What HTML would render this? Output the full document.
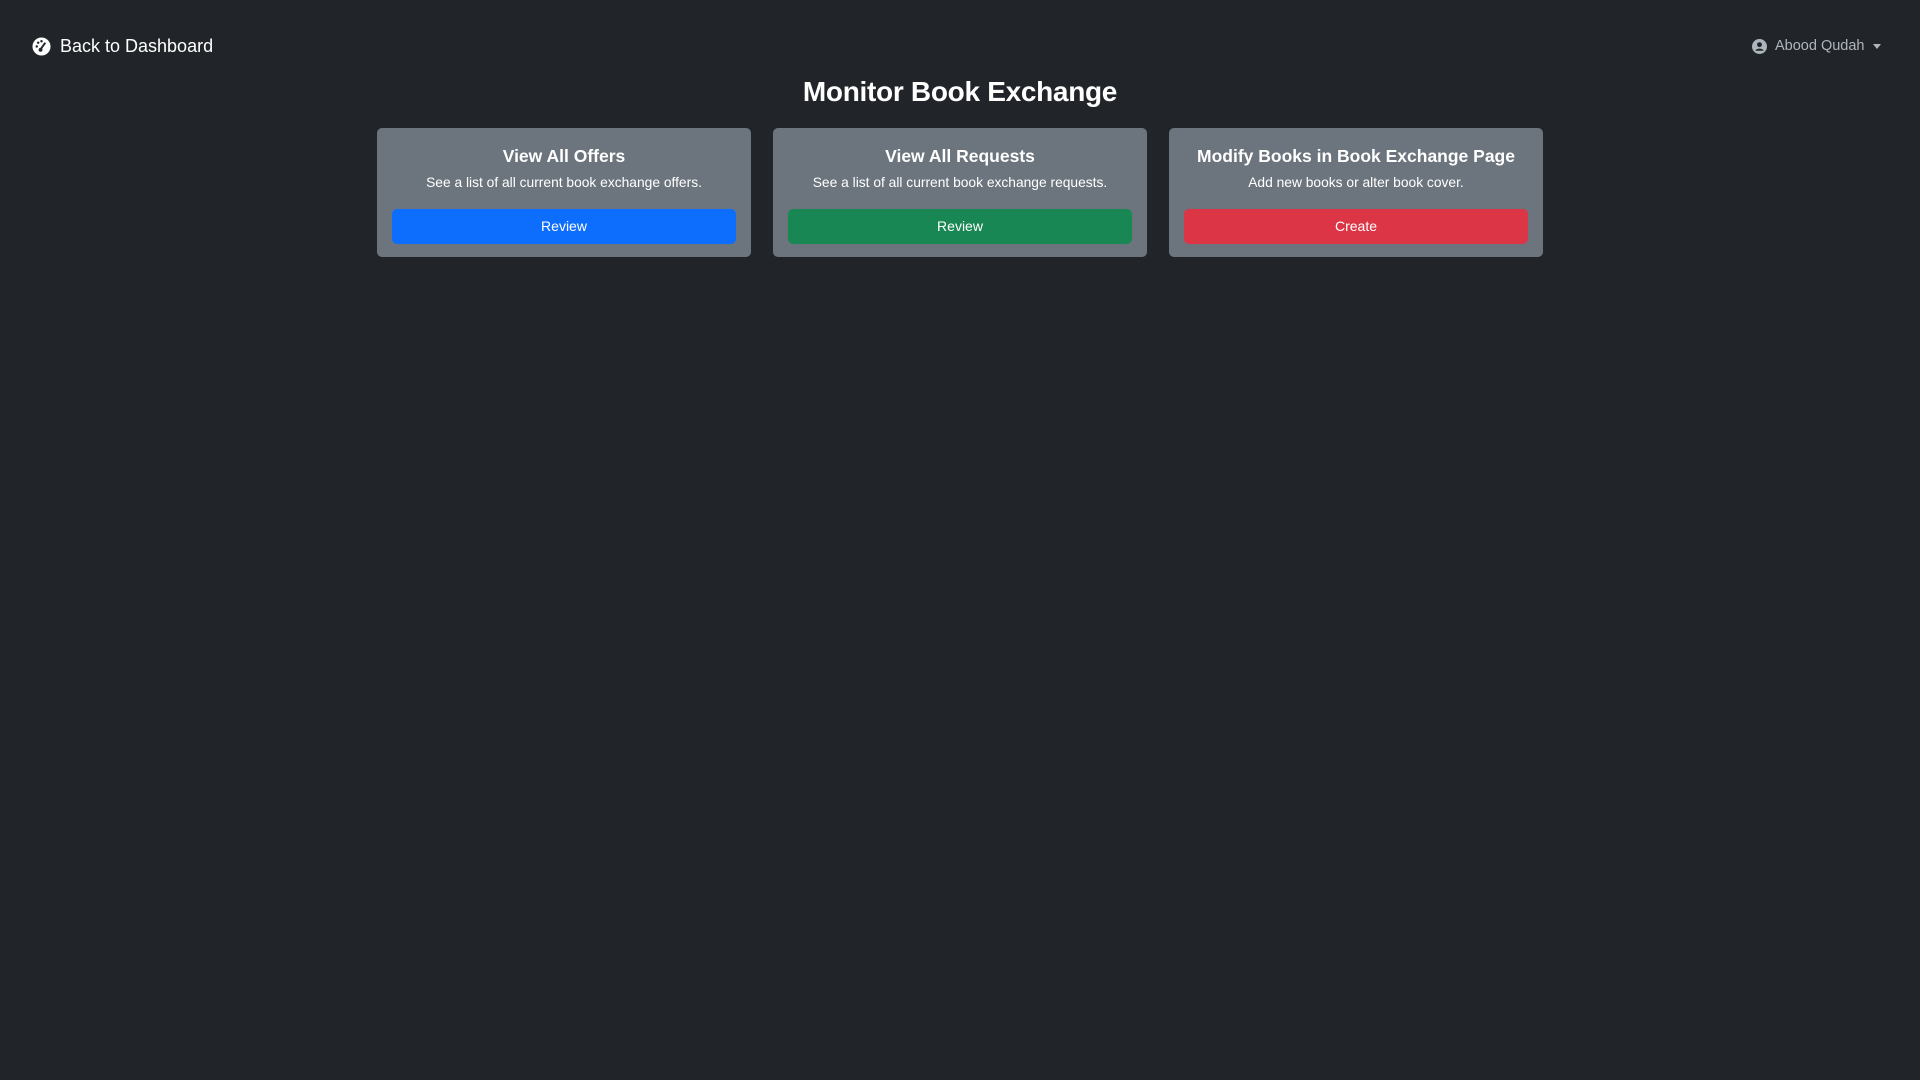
<!DOCTYPE html>
<html><head><meta charset="utf-8"><style>
*{box-sizing:border-box;margin:0;padding:0}
body{width:1920px;height:1080px;background:#212529;font-family:"Liberation Sans",sans-serif;color:#fff;position:relative;overflow:hidden}
.back{position:absolute;left:32px;top:36px;display:flex;align-items:center;font-size:18px;color:#fff}
.back svg{margin-right:9px}
.user{position:absolute;left:1752px;top:38px;display:flex;align-items:center;font-size:14.5px;color:#adb5bd}
.user svg{margin-right:8px}
.caret{display:inline-block;margin-left:8px;border-left:4px solid transparent;border-right:4px solid transparent;border-top:5px solid #adb5bd}
h1{position:absolute;top:76px;width:100%;text-align:center;font-size:28px;font-weight:bold;letter-spacing:-0.3px}
.card{position:absolute;top:128px;width:374px;height:129px;background:#6c757d;border-radius:5px;text-align:center;padding:15px 15px}
.card h2{font-size:17.5px;font-weight:bold;margin-top:1px;line-height:24px}
.card p{font-size:13.8px;margin-top:5px;line-height:20px}
.btn{display:block;margin-top:16px;height:35px;border-radius:5px;line-height:35px;font-size:14px;color:#fff}
</style></head><body>
<div class="back"><svg width="19" height="19" viewBox="0 0 20 20"><circle cx="10" cy="10" r="9.5" fill="#fff"/><circle cx="5" cy="10" r="1.3" fill="#212529"/><circle cx="6.5" cy="6" r="1.3" fill="#212529"/><circle cx="10" cy="4.5" r="1.3" fill="#212529"/><path d="M9 13 L14 6" stroke="#212529" stroke-width="2"/><circle cx="9" cy="13.5" r="2" fill="#212529"/></svg>Back to Dashboard</div>
<div class="user"><svg width="15" height="15" viewBox="0 0 16 16"><circle cx="8" cy="8" r="8" fill="#adb5bd"/><circle cx="8" cy="6" r="2.6" fill="#212529"/><path d="M3.5 12.5 C5 9.5 11 9.5 12.5 12.5 Z" fill="#212529"/></svg>Abood Qudah<span class="caret"></span></div>
<h1>Monitor Book Exchange</h1>
<div class="card" style="left:377px"><h2>View All Offers</h2><p>See a list of all current book exchange offers.</p><span class="btn" style="background:#0d6efd">Review</span></div>
<div class="card" style="left:773px"><h2>View All Requests</h2><p>See a list of all current book exchange requests.</p><span class="btn" style="background:#198754">Review</span></div>
<div class="card" style="left:1169px"><h2>Modify Books in Book Exchange Page</h2><p>Add new books or alter book cover.</p><span class="btn" style="background:#dc3545">Create</span></div>
</body></html>
